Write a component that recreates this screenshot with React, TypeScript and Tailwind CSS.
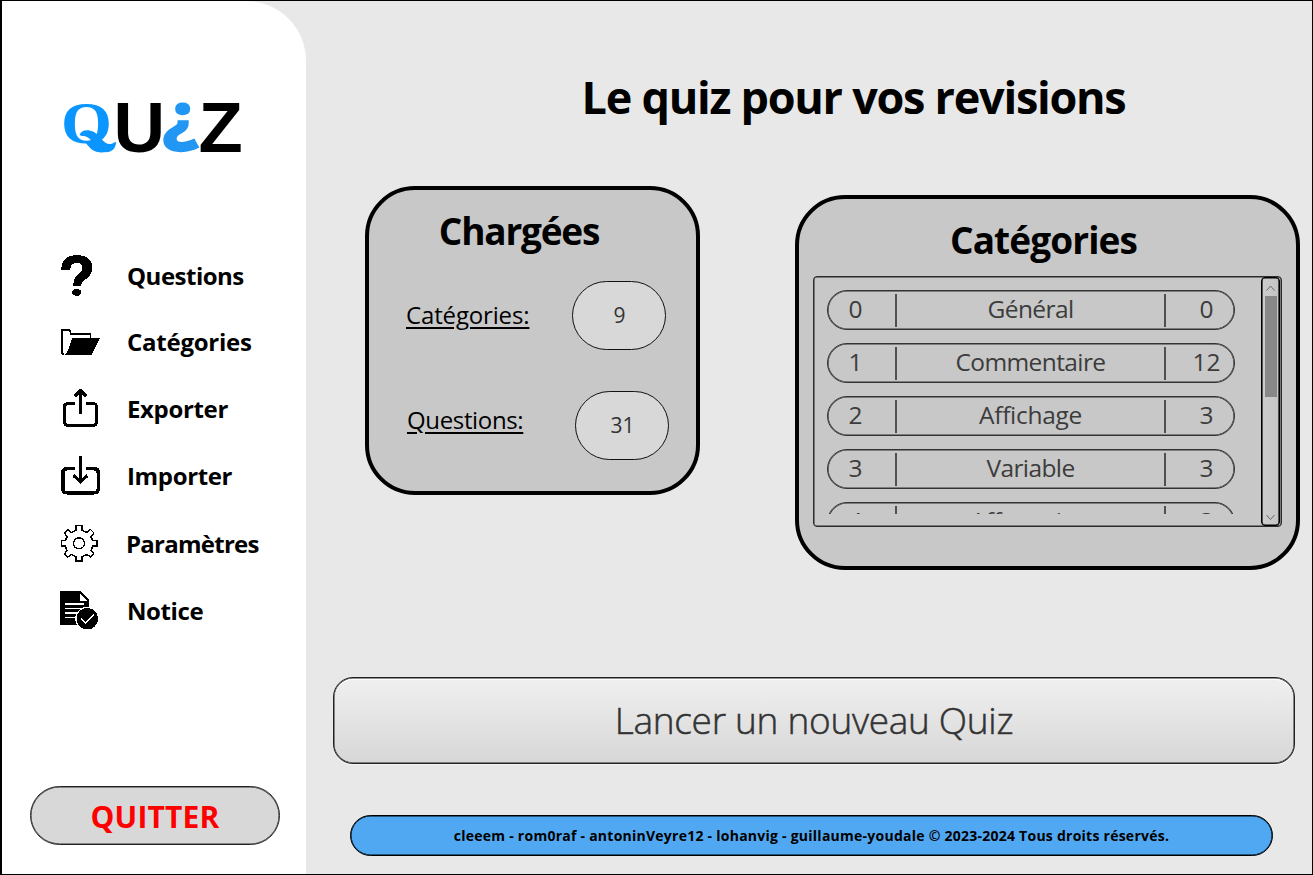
import React from "react";

const menu = [
  {
    label: "Questions",
    className: "tracking-[-0.5px] pb-px",
    viewBox: "58 243 46 67",
    icon: (
      <>
        <path
          fill="#000"
          d="M61 269.500C61 260 67 255 77 255C87 255 92.300 260 92.300 267.500C92.300 274 89 277 85.500 279.500C82 282 81.300 283 81.300 286H73.300C73.300 280 74.500 277.500 78 274.500C81 272 82.500 270.500 82.500 267.500C82.500 264.500 80.500 263 77 263C72.500 263 70.300 265.500 70.300 269.500Z"
        />
        <ellipse cx="76.700" cy="292.400" rx="4.500" ry="3.400" />
      </>
    ),
  },
  {
    label: "Catégories",
    className: "tracking-[-0.25px] pb-[3px]",
    viewBox: "58 310 46 67",
    icon: (
      <>
        <path
          fill="none"
          stroke="#000"
          strokeWidth="1.7"
          strokeLinejoin="round"
          d="M64 354.500Q62 354.500 62 352V330H69.500L71 334H90.500V338.500"
        />
        <path d="M73.500 338H100L92.500 353.500Q91.500 355 90 355H64Q67.500 352 68 350L71.500 340Q72.300 338 73.500 338Z" />
      </>
    ),
  },
  {
    label: "Exporter",
    className: "tracking-[-0.35px] pb-[3px]",
    viewBox: "58 377 46 67",
    icon: (
      <g fill="none" stroke="#000" strokeWidth="3" strokeLinejoin="round">
        <path d="M75 403.500H68Q64.500 403.500 64.500 407V421.500Q64.500 425.500 68 425.500H93Q96.500 425.500 96.500 421.500V407Q96.500 403.500 93 403.500H86" />
        <path d="M80.500 414V391M74.500 396.500L80.500 390.500L86.500 396.500" />
      </g>
    ),
  },
  {
    label: "Importer",
    className: "tracking-[-0.35px] pb-[3px]",
    viewBox: "58 444 46 67",
    icon: (
      <g fill="none" stroke="#000" strokeWidth="3.500" strokeLinejoin="round">
        <path d="M75 468.700H67Q62.800 468.700 62.800 473V488.500Q62.800 492.800 67 492.800H94Q98.300 492.800 98.300 488.500V473Q98.300 468.700 94 468.700H86" />
        <path strokeWidth="3" d="M80.500 456V482M73.500 475.500L80.500 482L87.500 475.500" />
      </g>
    ),
  },
  {
    label: "Paramètres",
    className: "tracking-[-0.75px] pb-px -ml-px",
    viewBox: "58 511 46 67",
    icon: (
      <g fill="none" stroke="#000" strokeWidth="1.400" strokeLinejoin="round">
        <path d="M76 525.500H82V530.500Q84.500 531 87 532.500L90.500 529.500L94 533L91 537Q92 538.500 92.500 540.500H97V546H92.500Q92 548.500 91 550.500L94 554L90.500 557L87 554.500Q84.500 556 82 556.500V561H76V556.500Q73.500 556 71.500 554.500L67.500 557L64.500 554L67 550.500Q66 548.500 65.500 546H61.500V540.500H65.500Q66 538.500 67 537L64.500 533L67.500 529.500L71.500 532.500Q73.500 531 76 530.500Z" />
        <circle cx="79" cy="543.300" r="5.500" />
      </g>
    ),
  },
  {
    label: "Notice",
    className: "tracking-[-0.4px] pb-px",
    viewBox: "58 578 46 67",
    icon: (
      <>
        <path d="M61 591H80L89 600V625H61Q60 625 60 624V592Q60 591 61 591Z" />
        <path fill="#fff" d="M79.500 593V601H87.500Z" />
        <path stroke="#fff" strokeWidth="1.800" d="M65 604H84M65 608.500H84M65 613H77M65 617.500H76" />
        <circle cx="87.300" cy="618.700" r="12" fill="#fff" />
        <circle cx="87.300" cy="618.700" r="10.700" />
        <path fill="none" stroke="#fff" strokeWidth="2" d="M81 618.500L85.500 623L94 614.500" />
      </>
    ),
  },
];

const categories: [number, string, number, string][] = [
  [0, "Général", 0, "tracking-[-0.6px]"],
  [1, "Commentaire", 12, "tracking-[-0.6px]"],
  [2, "Affichage", 3, "tracking-[-0.3px]"],
  [3, "Variable", 3, "tracking-[-0.6px]"],
  [4, "Affectation", 3, "tracking-[-0.4px]"],
];

function Logo() {
  return (
    <svg className="ml-[60px] mt-[97px] block overflow-visible" width="184" height="60" viewBox="62 98 184 60" role="img" aria-label="Quiz">
      <text transform="translate(61 142.500) scale(1.170 1.060)" fontFamily="Liberation Serif" fontWeight="700" fontSize="56" fill="#0a95ff">
        Q
      </text>
      <path
        d="M79.500 135C81 129.500 88 129 94 132C101 136 103 144 110 144C113 144 114 142 116 142C116 148 112 152.300 106 152.300C97 152.300 94 141 88 137.500C85 135.500 83 137 79.500 135Z"
        fill="#0a95ff"
      />
      <text transform="translate(113.500 151.500) scale(1.020 1)" fontFamily="Liberation Sans" fontWeight="700" fontSize="70" fill="#000">
        U
      </text>
      <text transform="translate(162 139.500) scale(1.120 1.020)" fontFamily="Open Sans" fontWeight="800" fontSize="66" fill="#2196f3">
        ¿
      </text>
      <text transform="translate(198.500 151.500) scale(1.020 1)" fontFamily="Liberation Sans" fontWeight="700" fontSize="71" fill="#000">
        Z
      </text>
    </svg>
  );
}

function Sidebar() {
  return (
    <aside className="flex h-full w-[304px] flex-col rounded-tr-[60px] bg-white">
      <Logo />
      <nav className="mt-[85px] flex flex-col pl-14">
        {menu.map((m) => (
          <a key={m.label} className="flex h-[67px] items-center gap-[23px]">
            <svg width="46" height="67" viewBox={m.viewBox} shapeRendering="crispEdges" className="shrink-0">
              {m.icon}
            </svg>
            <span className={`text-[24px] font-bold text-black ${m.className}`}>{m.label}</span>
          </a>
        ))}
      </nav>
      <button className="ml-[28px] mt-[141px] flex h-[59px] w-[250px] items-center justify-center rounded-full border border-[#222] bg-[#d8d8d8] pt-[2px] text-[30px] font-bold tracking-[0.15px] text-[#ff0000] shadow-[inset_0_0_0_0.5px_#333]">
        QUITTER
      </button>
    </aside>
  );
}

function LoadedCard() {
  return (
    <section className="h-[309px] w-[335px] rounded-[50px] border-4 border-black bg-[#c8c8c8]">
      <h2 className="mt-[16px] pr-[27px] text-center text-[37px] leading-[50px] font-bold tracking-[-1.2px]">Chargées</h2>
      <div className="mt-[25px] flex items-center pl-[37px]">
        <span className="w-[166px] -translate-y-px text-[24px] tracking-[-0.15px] underline decoration-[1.5px] underline-offset-[3px]">Catégories:</span>
        <span className="flex h-[69px] w-[94px] items-center justify-center rounded-full border border-[#111] bg-[#d8d8d8] pl-px text-[21px] text-[#333]">9</span>
      </div>
      <div className="mt-[41px] flex items-center pl-[38px]">
        <span className="w-[167.5px] -translate-y-[6px] text-[24px] tracking-[-0.35px] underline decoration-[1.5px] underline-offset-[3px]">Questions:</span>
        <span className="flex h-[69px] w-[94px] items-center justify-center rounded-full border border-[#111] bg-[#d8d8d8] pl-[2px] text-[21px] text-[#333]">31</span>
      </div>
    </section>
  );
}

function CategoriesCard() {
  return (
    <section className="mt-[9px] h-[375px] w-[505px] rounded-[50px] border-4 border-black bg-[#c8c8c8] pl-[14px]">
      <h2 className="mt-[16px] pr-[22px] text-center text-[37px] leading-[50px] font-bold tracking-[-0.9px]">Catégories</h2>
      <div className="mt-[11px] flex h-[251px] w-[469px] justify-between rounded-[4px] border border-[#2b2b2b] shadow-[inset_0_0_0_0.5px_#2b2b2b]">
        <div className="ml-[13px] mt-[13px] flex h-[224px] w-[408px] flex-col gap-[13px] overflow-hidden">
          {categories.map(([id, name, count, cls]) => (
            <div
              key={id}
              className="flex h-[40px] shrink-0 items-center rounded-full border border-[#333] px-px text-[24.5px] text-[#3c3c3c] shadow-[inset_0_0_0_0.6px_#333]"
            >
              <span className="w-[53px] pb-px text-center">{id}</span>
              <span className="ml-[13px] h-[33px] w-[2px] bg-[#505050]" />
              <span className={`w-[267px] pb-px text-center ${cls}`}>{name}</span>
              <span className="h-[33px] w-[2px] bg-[#505050]" />
              <span className="ml-[14px] w-[53px] pb-px text-center">{count}</span>
            </div>
          ))}
        </div>
        <div className="mr-px flex w-[19px] flex-col items-center rounded-[4px] border border-black bg-gradient-to-r from-[#cdcdcd] to-[#c4c4c4] pt-px shadow-[inset_0_0_0_0.6px_#000]">
          <svg width="11" height="17" viewBox="0 0 11 17" fill="none" stroke="#666">
            <path d="M1.500 11.500L5.500 7L9.500 11.500" />
          </svg>
          <div className="h-[101px] w-[12px] bg-[#888]" />
          <svg className="mt-auto" width="11" height="17" viewBox="0 0 11 17" fill="none" stroke="#666">
            <path d="M1.500 7L5.500 11.500L9.500 7" />
          </svg>
        </div>
      </div>
    </section>
  );
}

export default function App() {
  return (
    <div className="flex h-[875px] w-[1313px] overflow-hidden border border-l-2 border-black bg-[#e8e8e8] text-black [font-family:'Open_Sans','Noto_Sans',sans-serif]">
      <Sidebar />
      <main className="flex flex-1 flex-col">
        <h1 className="mt-[65px] pl-[89px] text-center text-[45px] leading-[62px] font-bold tracking-[-1.27px] whitespace-nowrap">
          Le quiz pour vos revisions
        </h1>
        <div className="mt-[58px] flex justify-between pr-[12px] pl-[59px]">
          <LoadedCard />
          <CategoriesCard />
        </div>
        <button className="mt-[107px] ml-[27px] flex h-[87px] w-[962px] items-center justify-center rounded-[20px] border border-[#222] bg-gradient-to-b from-[#f0f0f0] to-[#d7d7d7] pb-[2px] text-[37px] font-light tracking-[-0.3px] text-[#333] shadow-[inset_0_0_0_0.5px_#222,inset_0_2px_0_#fff,0_1px_0_#f6f6f6] [-webkit-text-stroke:0.5px_#333]">
          Lancer un nouveau Quiz
        </button>
        <footer className="mt-[51px] ml-[44px] flex h-[41px] w-[923px] items-center justify-center rounded-full border border-black bg-[#51a8f2] text-[14px] font-bold tracking-[0.25px] whitespace-nowrap shadow-[inset_0_0_0_0.5px_#000]">
          cleeem - rom0raf - antoninVeyre12 - lohanvig - guillaume-youdale © 2023-2024 Tous droits réservés.
        </footer>
      </main>
    </div>
  );
}
